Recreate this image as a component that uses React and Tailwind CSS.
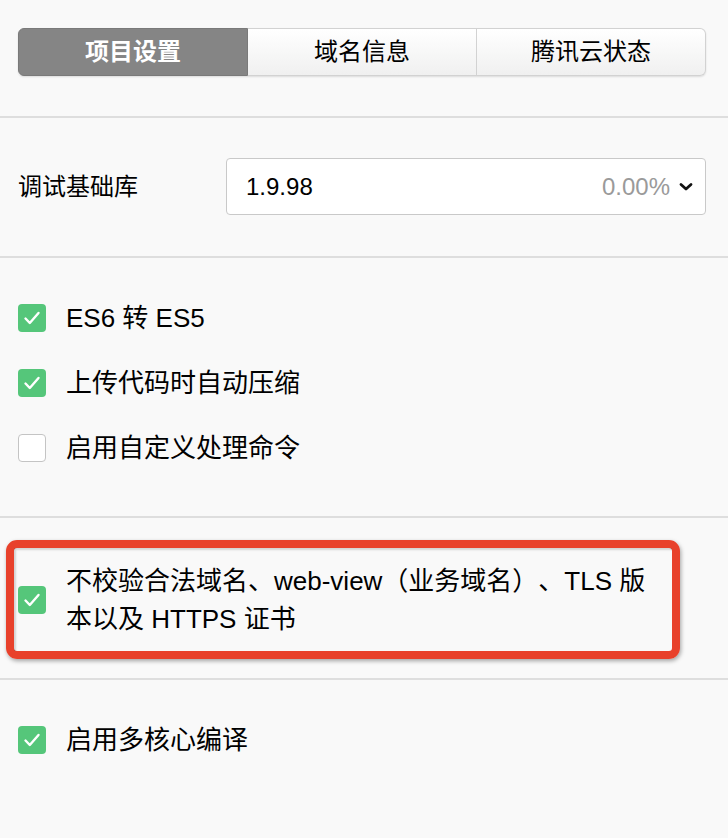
import React from 'react';

const FONT = "font-['Liberation_Sans','Noto_Sans_CJK_SC',sans-serif]";

const tabs = ['项目设置', '域名信息', '腾讯云状态'];

function CheckBox({ checked }) {
  if (!checked) {
    return (
      <div className="w-[28px] h-[28px] shrink-0 rounded-[4px] border border-[#c4c4c4] bg-white" />
    );
  }
  return (
    <div className="w-[28px] h-[28px] shrink-0 rounded-[4px] bg-[#55c67a] flex items-center justify-center">
      <svg width="20" height="20" viewBox="0 0 20 20" fill="none">
        <path d="M3.5 10.5l4.3 4.5L16.5 5" stroke="white" strokeWidth="2.4" strokeLinecap="round" strokeLinejoin="round" />
      </svg>
    </div>
  );
}

function Row({ checked, children }) {
  return (
    <div className="flex items-center h-[40px] pl-[18px]">
      <CheckBox checked={checked} />
      <span className="ml-[20px] text-[26px] leading-[40px] text-black">{children}</span>
    </div>
  );
}

const Divider = () => <div className="h-[2px] bg-[#dedede]" />;

export default function App() {
  return (
    <div className={`w-full min-h-[838px] bg-[#f9f9f9] [text-spacing-trim:space-all] ${FONT}`}>
      {/* tabs */}
      <div className="pt-[28px] pb-[40px] pl-[18px] pr-[22px]">
        <div className="flex h-[48px] rounded-[6px] shadow-[0_1px_2px_rgba(0,0,0,0.12)]">
          {tabs.map((t, i) => (
            <div
              key={t}
              className={
                i === 0
                  ? 'flex-1 flex items-center justify-center rounded-l-[6px] bg-[#858585] border border-[#7a7a7a] text-white text-[24px] font-bold'
                  : `flex-1 flex items-center justify-center bg-gradient-to-b from-white to-[#f0f0f0] border border-[#d2d2d2] border-l-0 text-black text-[24px] ${i === 2 ? 'rounded-r-[6px]' : ''}`
              }
            >
              {t}
            </div>
          ))}
        </div>
      </div>
      <Divider />

      {/* base library */}
      <div className="pt-[40px] pb-[41px] flex items-center pl-[18px] pr-[22px]">
        <div className="w-[208px] text-[24px] text-black">调试基础库</div>
        <div className="flex-1 h-[57px] bg-white border border-[#c9c9c9] rounded-[4px] flex items-center pl-[19px] pr-[11px]">
          <span className="text-[24px] text-black flex-1">1.9.98</span>
          <span className="text-[24px] text-[#9a9a9a]">0.00%</span>
          <svg width="16" height="10" viewBox="0 0 16 10" className="ml-[8px]" fill="none">
            <path d="M3 2.5l5 4.5 5-4.5" stroke="#111" strokeWidth="2.8" strokeLinecap="round" strokeLinejoin="round" />
          </svg>
        </div>
      </div>
      <Divider />

      {/* compile options */}
      <div className="pt-[40px] pb-[48px] flex flex-col gap-[25px]">
        <Row checked>ES6 转 ES5</Row>
        <Row checked>上传代码时自动压缩</Row>
        <Row checked={false}>启用自定义处理命令</Row>
      </div>
      <Divider />

      {/* highlighted option */}
      <div className="pt-[22px] pb-[19px] pl-[6px] pr-[48px]">
        <div className="h-[119px] border-[8px] border-[#e8412b] rounded-[11px] shadow-[1px_2px_4px_rgba(0,0,0,0.35)]">
          <div className="w-full h-full flex items-center pl-[4px] shadow-[inset_2px_2px_2px_rgba(0,0,0,0.15)]">
            <CheckBox checked />
            <span className="ml-[20px] text-[26px] leading-[38px] text-black">
              不校验合法域名、web-view（业务域名）、TLS 版
              <br />
              本以及 HTTPS 证书
            </span>
          </div>
        </div>
      </div>
      <Divider />

      <div className="pt-[40px]">
        <Row checked>启用多核心编译</Row>
      </div>
    </div>
  );
}
